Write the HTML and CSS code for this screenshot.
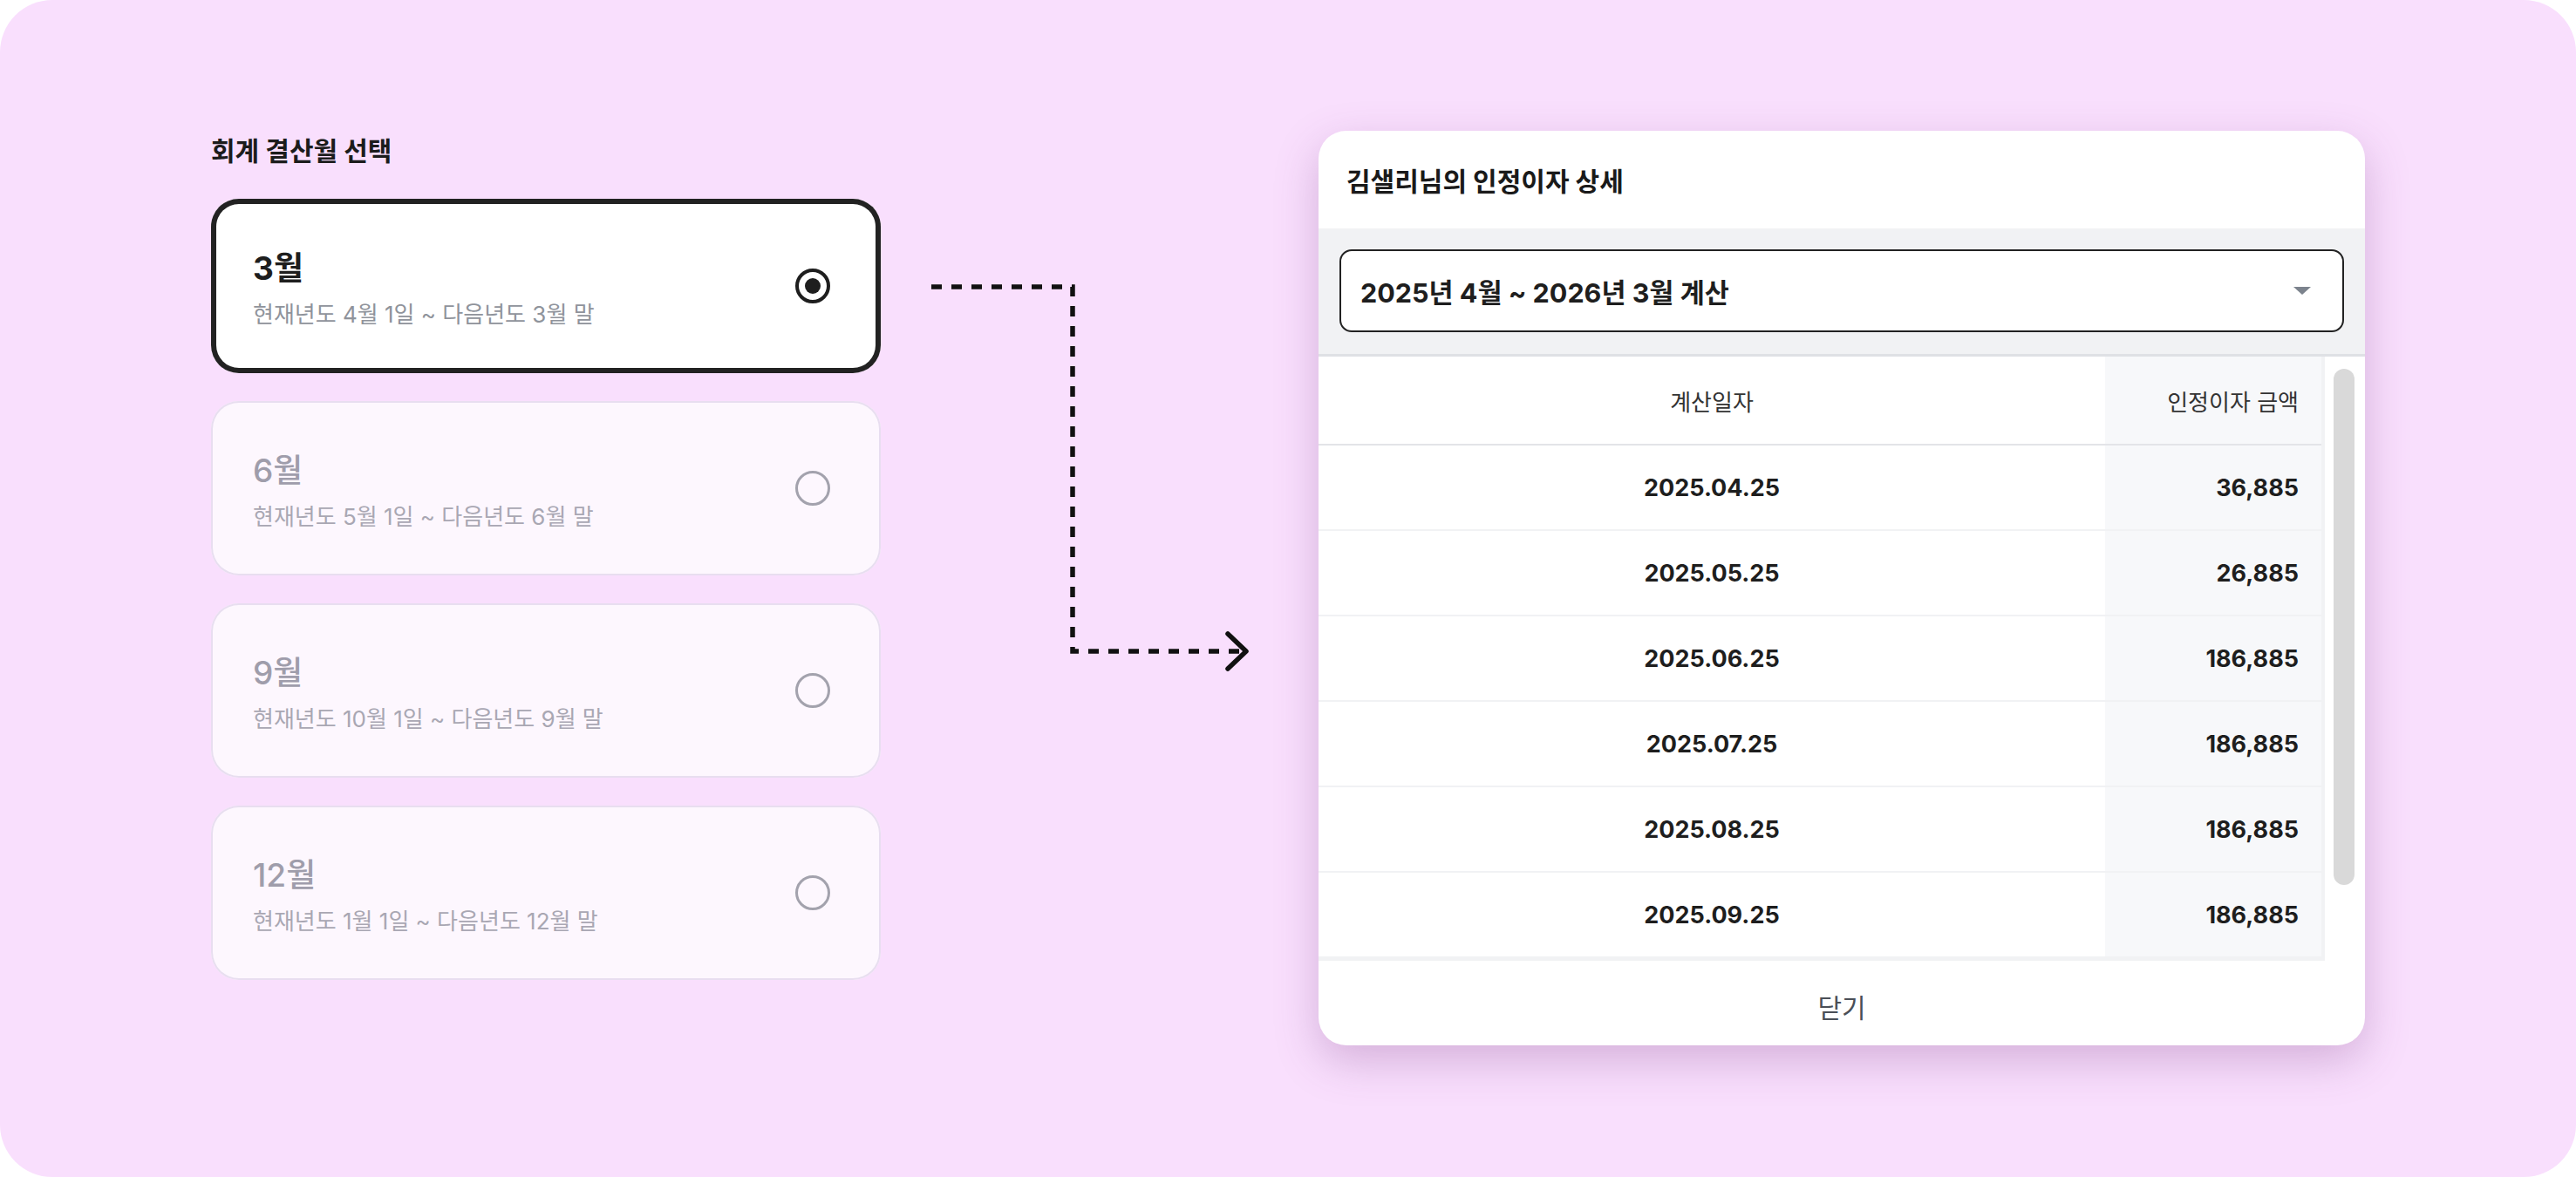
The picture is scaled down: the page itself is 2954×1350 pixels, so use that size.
FILE: index.html
```html
<!DOCTYPE html>
<html lang="ko">
<head>
  <meta charset="utf-8">
  <title>회계 결산월 선택</title>
  <link rel="stylesheet" href="styles.css">
</head>
<body>
  <div class="canvas">
    <section class="picker">
      <h2>회계 결산월 선택</h2>
      <div class="options">
        <label class="option selected">
          <div class="option-text">
            <span class="option-month">3월</span>
            <span class="option-range">현재년도 4월 1일 ~ 다음년도 3월 말</span>
          </div>
          <span class="radio"></span>
        </label>
        <label class="option">
          <div class="option-text">
            <span class="option-month">6월</span>
            <span class="option-range">현재년도 5월 1일 ~ 다음년도 6월 말</span>
          </div>
          <span class="radio"></span>
        </label>
        <label class="option">
          <div class="option-text">
            <span class="option-month">9월</span>
            <span class="option-range">현재년도 10월 1일 ~ 다음년도 9월 말</span>
          </div>
          <span class="radio"></span>
        </label>
        <label class="option">
          <div class="option-text">
            <span class="option-month">12월</span>
            <span class="option-range">현재년도 1월 1일 ~ 다음년도 12월 말</span>
          </div>
          <span class="radio"></span>
        </label>
      </div>
    </section>

    <svg class="connector" width="502" height="1049" viewBox="0 0 502 1049" fill="none">
      <path d="M58 179H220V597H412" stroke="#111" stroke-width="5.5" stroke-dasharray="12 11"/>
      <path d="M398 577L419 597L398 617" stroke="#111" stroke-width="5.5" stroke-linecap="round" stroke-linejoin="round"/>
    </svg>

    <div class="modal">
      <div class="modal-header">김샐리님의 인정이자 상세</div>
      <div class="modal-filter">
        <div class="select">
          <span>2025년 4월 ~ 2026년 3월 계산</span>
          <span class="caret"></span>
        </div>
      </div>
      <div class="table-area">
        <div class="table-box">
          <table>
            <thead>
              <tr><th>계산일자</th><th class="amount">인정이자 금액</th></tr>
            </thead>
            <tbody>
              <tr><td>2025.04.25</td><td class="amount">36,885</td></tr>
              <tr><td>2025.05.25</td><td class="amount">26,885</td></tr>
              <tr><td>2025.06.25</td><td class="amount">186,885</td></tr>
              <tr><td>2025.07.25</td><td class="amount">186,885</td></tr>
              <tr><td>2025.08.25</td><td class="amount">186,885</td></tr>
              <tr><td>2025.09.25</td><td class="amount">186,885</td></tr>
            </tbody>
          </table>
        </div>
        <div class="scrollbar"><div class="thumb"></div></div>
      </div>
      <div class="modal-footer">닫기</div>
    </div>
  </div>
</body>
</html>
```

FILE: styles.css
```css
body {
  margin: 0;
  background: #fff;
  font-family: Inter, "Noto Sans CJK KR", sans-serif;
}

.canvas {
  width: 2954px;
  height: 1350px;
  box-sizing: border-box;
  padding-top: 150px;
  background: #f9dffd;
  border-radius: 60px;
  display: flex;
  justify-content: center;
  align-items: flex-start;
}

/* left: month picker */
.picker {
  width: 768px;
}

.picker h2 {
  margin: 3px 0 35px;
  font-size: 30px;
  line-height: 40px;
  font-weight: 700;
  color: #1c1c1c;
}

.options {
  display: flex;
  flex-direction: column;
  gap: 32px;
}

.option {
  height: 200px;
  box-sizing: border-box;
  padding: 0 58px 0 48px;
  border-radius: 32px;
  background: #fdf7fe;
  box-shadow: inset 0 0 0 2px #e8def0;
  display: flex;
  align-items: center;
  justify-content: space-between;
}

.option.selected {
  background: #fff;
  box-shadow: inset 0 0 0 6px #222;
}

.option-text {
  display: flex;
  flex-direction: column;
  gap: 15px;
  margin-top: 7px;
}

.option-month {
  font-size: 37px;
  line-height: 44px;
  font-weight: 500;
  color: #9f9dab;
}

.option-range {
  font-size: 26px;
  line-height: 32px;
  color: #a9a7b3;
}

.selected .option-month {
  font-weight: 700;
  color: #1e1e1e;
}

.selected .option-range {
  color: #8f939b;
}

.radio {
  width: 40px;
  height: 40px;
  box-sizing: border-box;
  border: 3px solid #a3a2ad;
  border-radius: 50%;
  display: flex;
  align-items: center;
  justify-content: center;
}

.selected .radio {
  border: 4px solid #1e1e1e;
}

.selected .radio::after {
  content: "";
  width: 18px;
  height: 18px;
  border-radius: 50%;
  background: #1e1e1e;
}

.connector {
  flex-shrink: 0;
}

/* right: detail modal */
.modal {
  width: 1200px;
  height: 1049px;
  background: #fff;
  border-radius: 32px;
  box-shadow: 0 18px 50px rgba(130, 70, 140, 0.3);
  overflow: hidden;
  display: flex;
  flex-direction: column;
}

.modal-header {
  height: 112px;
  flex-shrink: 0;
  padding-left: 32px;
  display: flex;
  align-items: center;
  font-size: 30px;
  font-weight: 700;
  color: #1a1a1a;
}

.modal-filter {
  background: #f1f2f4;
  padding: 24px 24px 25px;
  border-bottom: 3px solid #dfe1e5;
}

.select {
  height: 95px;
  box-sizing: border-box;
  padding: 0 36px 0 22px;
  border: 2px solid #222;
  border-radius: 14px;
  background: #fff;
  display: flex;
  align-items: center;
  justify-content: space-between;
  font-size: 30.5px;
  font-weight: 700;
  color: #1e1e1e;
}

.caret {
  width: 0;
  height: 0;
  border-left: 10px solid transparent;
  border-right: 10px solid transparent;
  border-top: 9px solid #7c838d;
}

.table-area {
  height: 693px;
  flex-shrink: 0;
  display: flex;
}

.table-box {
  flex: 1;
  padding-right: 4px;
  background: #f1f2f4;
  overflow: hidden;
}

table {
  width: 100%;
  border-collapse: collapse;
}

th, td {
  padding: 0;
  background: #fff;
}

th {
  height: 100px;
  font-size: 26px;
  font-weight: 400;
  color: #333;
  border-bottom: 2px solid #e3e4e8;
}

td {
  height: 96px;
  font-size: 27px;
  font-weight: 700;
  color: #1e1e1e;
  text-align: center;
  border-bottom: 2px solid #f1f2f4;
}

th.amount, td.amount {
  width: 248px;
  box-sizing: border-box;
  padding-right: 26px;
  text-align: right;
  background: #f7f8fa;
}

.scrollbar {
  width: 46px;
  box-sizing: border-box;
  padding: 14px 12px 0 10px;
  background: #fff;
}

.thumb {
  height: 592px;
  background: #d9d9d9;
  border-radius: 12px;
}

.modal-footer {
  flex: 1;
  padding-top: 6px;
  display: flex;
  align-items: center;
  justify-content: center;
  font-size: 30px;
  color: #4a4f57;
}
```
